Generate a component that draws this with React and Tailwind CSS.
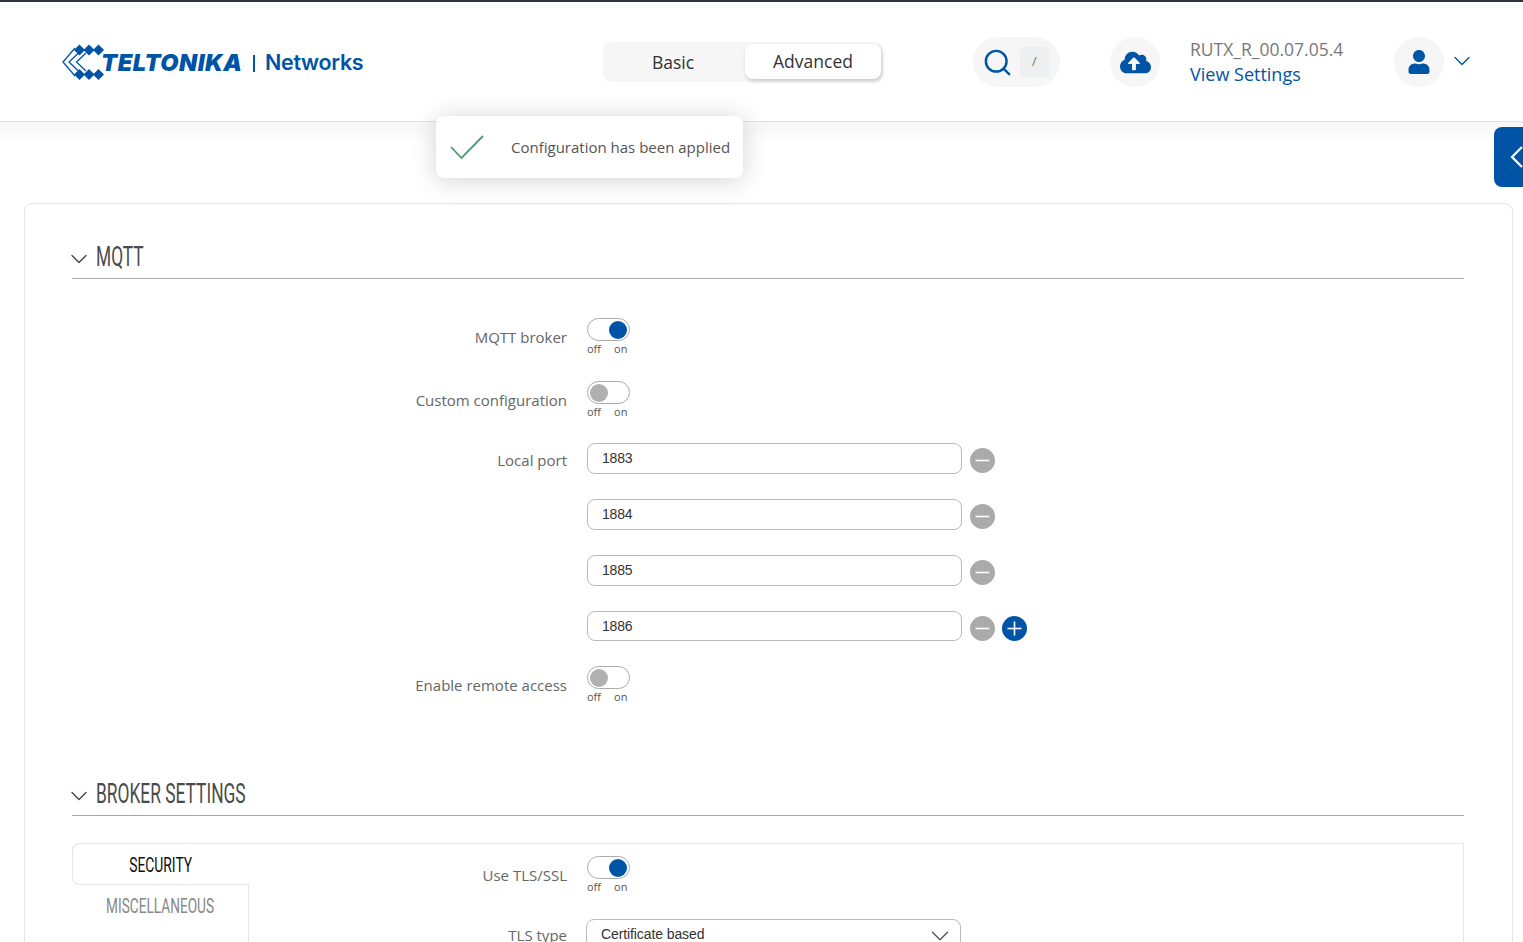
import { ChevronDown, Search } from "lucide-react";
import { FaCloudUploadAlt, FaUser } from "react-icons/fa";

const ui = "font-['Open_Sans',sans-serif]";
const cond = "font-['Roboto',sans-serif]";

const Logo = () => (
  <div className="flex items-center">
    <svg width="42" height="38" viewBox="0 0 42 38" className="-mr-[3px]">
      <g fill="#0054a6">
        <path d="M17.500 1.500l5.500 5.500-5.500 5.500-5.500-5.500z" />
        <path d="M27 1.500l5.500 5.500-5.500 5.500-5.500-5.500z" />
        <path d="M36.500 1.500l5.500 5.500-5.500 5.500-5.500-5.500z" />
        <path d="M17.500 26l5.500 5.500-5.500 5.500-5.500-5.500z" />
        <path d="M27 26l5.500 5.500-5.500 5.500-5.500-5.500z" />
        <path d="M36.500 26l5.500 5.500-5.500 5.500-5.500-5.500z" />
      </g>
      <g fill="none" stroke="#0054a6" strokeWidth="1.300">
        <path d="M13 5L1 19 13 33" />
        <path d="M17.500 9L7 19 17.500 29" />
        <path d="M24 10L14.500 19 24 28" />
      </g>
    </svg>
    <span className="mt-[2px] w-[142px] text-[23.500px] leading-none font-black italic tracking-[0.5px] whitespace-nowrap text-[#0054a6] font-['Inter',sans-serif]">
      TELTONIKA
    </span>
    <span className="ml-[10px] mt-[2px] h-[17px] w-[2px] bg-[#0054a6]" />
    <span className="ml-[10px] mt-[2px] text-[21.500px] leading-none font-semibold text-[#0054a6] font-['Inter',sans-serif] tracking-[-0.3px]">
      Networks
    </span>
  </div>
);

const Header = () => (
  <header className="flex h-[122px] items-center border-t-2 border-b border-t-[#2f3440] border-b-[#e4e4e4] bg-white pt-[1px]">
    <div className="ml-[62px] w-[541px]">
      <Logo />
    </div>
    <div className="flex h-[40px] w-[280px] rounded-lg bg-[#f6f6f6] text-[17.500px] text-[#333]">
      <div className="flex w-[142px] items-center justify-center pr-[2px]">Basic</div>
      <div className="mt-[2px] flex h-[35px] w-[136px] items-center justify-center rounded-lg bg-white shadow-[1px_2px_4px_rgba(0,0,0,0.2)]">
        Advanced
      </div>
    </div>
    <div className="ml-[90px] flex h-[50px] w-[87px] items-center rounded-full bg-[#f6f6f6] pl-[9px]">
      <Search size={31} strokeWidth={1.900} className="text-[#0054a6]" />
      <span className="ml-[7px] flex h-[30px] w-[29px] items-center justify-center rounded bg-[#eeeff1] text-[13px] text-[#777]">
        /
      </span>
    </div>
    <div className="ml-[50px] flex h-[50px] w-[50px] items-center justify-center rounded-full bg-[#f6f6f6]">
      <FaCloudUploadAlt size={31} className="text-[#0054a6]" />
    </div>
    <div className="ml-[30px] w-[204px]">
      <div className="text-[17.500px] leading-[24px] text-[#777]">RUTX_R_00.07.05.4</div>
      <div className="text-[18px] leading-[26px] font-medium text-[#0054a6]">View Settings</div>
    </div>
    <div className="flex h-[50px] w-[50px] items-center justify-center rounded-full bg-[#f6f6f6]">
      <FaUser size={24} className="text-[#0054a6]" />
    </div>
    <ChevronDown size={28} strokeWidth={1.200} className="ml-[4px] -mt-[2px] text-[#0054a6]" />
  </header>
);

const Toggle = ({ on }) => (
  <div className="w-[43px]">
    <div className={`flex h-[23px] w-[43px] items-center rounded-full border border-[#aaa] bg-white px-[2px] ${on ? "justify-end" : "justify-start"}`}>
      <span className={`h-[18px] w-[18px] rounded-full ${on ? "bg-[#0054a6]" : "bg-[#b0b0b0]"}`} />
    </div>
    <div className="mt-[1px] flex gap-[13px] text-[11px] leading-[14px] text-[#555]">
      <span>off</span>
      <span>on</span>
    </div>
  </div>
);

const Row = ({ label, className = "", children }) => (
  <div className={`flex ${className}`}>
    <label className="w-[495px] text-right text-[15px] leading-[20px] text-[#666]">{label}</label>
    <div className="ml-[20px] flex items-start">{children}</div>
  </div>
);

const Round = ({ plus }) => (
  <span className={`flex h-[25px] w-[25px] items-center justify-center rounded-full ${plus ? "ml-[7px] bg-[#0054a6]" : "ml-[8px] bg-[#aaa]"}`}>
    <svg width="15" height="15" viewBox="0 0 15 15" stroke="#fff" strokeWidth="1.600">
      <path d="M0.500 7.500h14" />
      {plus && <path d="M7.500 0.500v14" />}
    </svg>
  </span>
);

const Port = ({ label = "", value, plus, className = "" }) => (
  <Row label={label} className={className}>
    <div className={`flex w-[375px] -translate-y-[1px] items-center rounded-lg border border-[#bbb] bg-white pl-[14px] text-[14px] tracking-[-0.2px] text-[#333] font-['Liberation_Sans',sans-serif] ${plus ? "h-[30px]" : "h-[31px]"}`}>
      {value}
    </div>
    <div className="flex items-center pt-[4px]">
      <Round />
      {plus && <Round plus />}
    </div>
  </Row>
);

const Heading = ({ title, className = "" }) => (
  <div className={`flex h-[42px] items-center border-b border-[#a8a8a8] pb-[2px] ${className}`}>
    <ChevronDown size={28} strokeWidth={1.200} className="-ml-[7px] mt-[4px] -mr-[7px] text-[#444]" />
    <h2 className={`ml-[10px] origin-left scale-x-[0.62] text-[28px] leading-none whitespace-nowrap text-[#4a4a4a] ${cond}`}>
      {title}
    </h2>
  </div>
);

export default function App() {
  return (
    <div className={`relative h-[942px] overflow-hidden bg-white ${ui}`}>
      <Header />
      <div className="h-[20px] bg-gradient-to-b from-[#f6f6f6] to-white" />

      {/* toast + side tab sit over the page */}
      <div className="absolute left-[436px] top-[116px] flex h-[62px] w-[307px] items-center rounded-lg bg-white pl-[13px] shadow-[0_2px_26px_rgba(0,0,0,0.18)]">
        <svg width="36" height="26" viewBox="0 0 36 26" fill="none" stroke="#4a9c6d" strokeWidth="1.800">
          <path d="M2 13l10.500 11L34 2" />
        </svg>
        <span className="ml-[26px] text-[15px] text-[#555]">Configuration has been applied</span>
      </div>
      <div className="absolute right-0 top-[127px] flex h-[60px] w-[29px] items-center overflow-hidden rounded-l-lg bg-[#0054a6] pl-[16px]">
        <svg width="14" height="22" viewBox="0 0 14 22" fill="none" stroke="#fff" strokeWidth="2.200" className="shrink-0">
          <path d="M12 1L2 11l10 10" />
        </svg>
      </div>

      <main className="ml-[24px] mr-[10px] mt-[61px] h-[760px] rounded-lg border border-[#e5e5e5] pl-[47px] pr-[48px] pt-[33px]">
        <Heading title="MQTT" />

        <Row label="MQTT broker" className="mt-[39px] [&>label]:pt-[9px]">
          <Toggle on />
        </Row>
        <Row label="Custom configuration" className="mt-[25px] [&>label]:pt-[9px]">
          <Toggle />
        </Row>
        <Port label="Local port" value="1883" className="mt-[25px] [&>label]:pt-[6px]" />
        <Port value="1884" className="mt-[25px]" />
        <Port value="1885" className="mt-[25px]" />
        <Port value="1886" plus className="mt-[25px]" />
        <Row label="Enable remote access" className="mt-[24px] [&>label]:pt-[9px]">
          <Toggle />
        </Row>

        <Heading title="BROKER SETTINGS" className="mt-[70px]" />

        <div className="mt-[27px] flex h-[200px] rounded-tl-lg border-t border-r border-[#e5e5e5]">
          <div className="w-[177px] shrink-0">
            <div className={`-mt-[1px] flex h-[42px] items-center justify-center rounded-l-lg border border-r-0 border-[#e5e5e5] pt-[3px] text-[#111] ${cond}`}>
              <span className="scale-x-[0.66] text-[21px] whitespace-nowrap">SECURITY</span>
            </div>
            <div className={`flex h-[160px] justify-center border-r border-[#e5e5e5] pt-[8px] text-[#888] ${cond}`}>
              <span className="scale-x-[0.65] text-[21px] leading-[26px] whitespace-nowrap">MISCELLANEOUS</span>
            </div>
          </div>
          <div className="pt-[12px]">
            <Row label="Use TLS/SSL" className="-ml-[177px] [&>label]:pt-[9px]">
              <Toggle on />
            </Row>
            <Row label="TLS type" className="-ml-[177px] mt-[25px] [&>label]:pt-[6px]">
              <div className="-ml-[1px] flex h-[31px] w-[375px] items-center justify-between rounded-lg border border-[#bbb] bg-white pb-[1px] pl-[14px] pr-[5px] text-[14px] tracking-[-0.1px] text-[#333] font-['Liberation_Sans',sans-serif]">
                Certificate based
                <ChevronDown size={30} strokeWidth={1.100} className="mt-[4px] text-[#555]" />
              </div>
            </Row>
          </div>
        </div>
      </main>
    </div>
  );
}
